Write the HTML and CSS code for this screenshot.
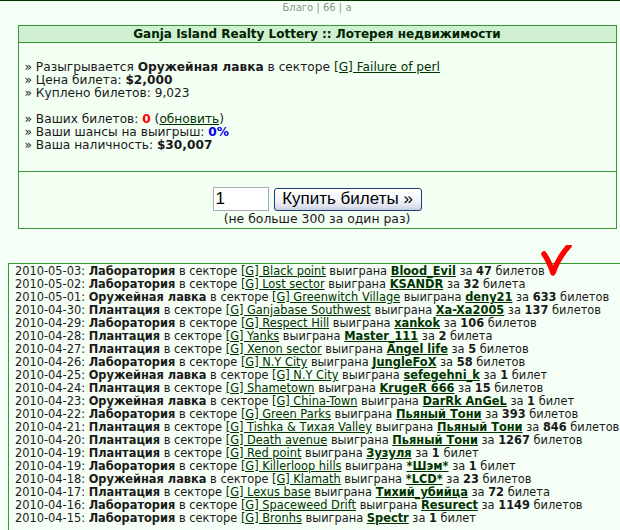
FILE: index.html
```html
<!DOCTYPE html>
<html>
<head>
<meta charset="utf-8">
<link rel="stylesheet" href="styles.css">
</head>
<body>
<div class="page">
<div class="topnav">Благо | <a href="#">66</a> | <a href="#">а</a></div>

<div class="lottery">
  <div class="lottery-head">Ganja Island Realty Lottery :: Лотерея недвижимости</div>
  <div class="lottery-info">
    <div>» Разыгрывается <b>Оружейная лавка</b> в секторе <a href="#">[G] Failure of perl</a></div>
    <div>» Цена билета: <b>$2,000</b></div>
    <div>» Куплено билетов: 9,023</div>
    <div class="gap">» Ваших билетов: <b class="red">0</b> (<a href="#">обновить</a>)</div>
    <div>» Ваши шансы на выигрыш: <b class="blue">0%</b></div>
    <div>» Ваша наличность: <b>$30,007</b></div>
  </div>
  <div class="lottery-buy">
    <div class="buy-row">
      <input class="qty" type="text" value="1">
      <button class="buy-btn">Купить билеты »</button>
    </div>
    <div class="note">(не больше 300 за один раз)</div>
  </div>
</div>

<div class="history-wrap">
  <svg class="tick" width="40" height="40" viewBox="0 0 40 40">
    <path d="M3 9 Q8 16 12 28 Q17 13 28 1" fill="none" stroke="#ff0000" stroke-width="5.5" stroke-linecap="round" stroke-linejoin="round"/>
  </svg>
  <div class="history">
    <div>2010-05-03: <b>Лаборатория</b> в секторе <a href="#">[G] Black point</a> выиграна <a class="w" href="#">Blood_Evil</a> за <b>47</b> билетов</div>
    <div>2010-05-02: <b>Лаборатория</b> в секторе <a href="#">[G] Lost sector</a> выиграна <a class="w" href="#">KSANDR</a> за <b>32</b> билета</div>
    <div>2010-05-01: <b>Оружейная лавка</b> в секторе <a href="#">[G] Greenwitch Village</a> выиграна <a class="w" href="#">deny21</a> за <b>633</b> билетов</div>
    <div>2010-04-30: <b>Плантация</b> в секторе <a href="#">[G] Ganjabase Southwest</a> выиграна <a class="w" href="#">Xa-Xa2005</a> за <b>137</b> билетов</div>
    <div>2010-04-29: <b>Лаборатория</b> в секторе <a href="#">[G] Respect Hill</a> выиграна <a class="w" href="#">xankok</a> за <b>106</b> билетов</div>
    <div>2010-04-28: <b>Плантация</b> в секторе <a href="#">[G] Yanks</a> выиграна <a class="w" href="#">Master_111</a> за <b>2</b> билета</div>
    <div>2010-04-27: <b>Плантация</b> в секторе <a href="#">[G] Xenon sector</a> выиграна <a class="w" href="#">Angel life</a> за <b>5</b> билетов</div>
    <div>2010-04-26: <b>Лаборатория</b> в секторе <a href="#">[G] N.Y City</a> выиграна <a class="w" href="#">JungleFoX</a> за <b>58</b> билетов</div>
    <div>2010-04-25: <b>Оружейная лавка</b> в секторе <a href="#">[G] N.Y City</a> выиграна <a class="w" href="#">sefegehni_k</a> за <b>1</b> билет</div>
    <div>2010-04-24: <b>Плантация</b> в секторе <a href="#">[G] Shametown</a> выиграна <a class="w" href="#">KrugeR 666</a> за <b>15</b> билетов</div>
    <div>2010-04-23: <b>Оружейная лавка</b> в секторе <a href="#">[G] China-Town</a> выиграна <a class="w" href="#">DarRk AnGeL</a> за <b>1</b> билет</div>
    <div>2010-04-22: <b>Лаборатория</b> в секторе <a href="#">[G] Green Parks</a> выиграна <a class="w" href="#">Пьяный Тони</a> за <b>393</b> билетов</div>
    <div>2010-04-21: <b>Плантация</b> в секторе <a href="#">[G] Tishka &amp; Тихая Valley</a> выиграна <a class="w" href="#">Пьяный Тони</a> за <b>846</b> билетов</div>
    <div>2010-04-20: <b>Плантация</b> в секторе <a href="#">[G] Death avenue</a> выиграна <a class="w" href="#">Пьяный Тони</a> за <b>1267</b> билетов</div>
    <div>2010-04-19: <b>Плантация</b> в секторе <a href="#">[G] Red point</a> выиграна <a class="w" href="#">Зузуля</a> за <b>1</b> билет</div>
    <div>2010-04-19: <b>Лаборатория</b> в секторе <a href="#">[G] Killerloop hills</a> выиграна <a class="w" href="#">*Шэм*</a> за <b>1</b> билет</div>
    <div>2010-04-18: <b>Оружейная лавка</b> в секторе <a href="#">[G] Klamath</a> выиграна <a class="w" href="#">*LCD*</a> за <b>23</b> билетов</div>
    <div>2010-04-17: <b>Плантация</b> в секторе <a href="#">[G] Lexus base</a> выиграна <a class="w" href="#">Тихий_убийца</a> за <b>72</b> билета</div>
    <div>2010-04-16: <b>Лаборатория</b> в секторе <a href="#">[G] Spaceweed Drift</a> выиграна <a class="w" href="#">Resurect</a> за <b>1149</b> билетов</div>
    <div>2010-04-15: <b>Лаборатория</b> в секторе <a href="#">[G] Bronhs</a> выиграна <a class="w" href="#">Spectr</a> за <b>1</b> билет</div>
  </div>
</div>
</div>
</body>
</html>
```

FILE: styles.css
```css
html {
  overflow: hidden;
}
body {
  margin: 0;
  background: #f5fff5;
  border-top: 1px solid #003300;
  font-family: "DejaVu Sans", Verdana, sans-serif;
  color: #1a1a1a;
}
.page {
  width: 634px;
}
a {
  color: #003300;
  text-decoration: underline;
}
.topnav {
  text-align: center;
  font-size: 10px;
  line-height: 12px;
  padding-top: 1px;
  color: #8a968a;
}
.topnav a {
  color: #8a968a;
  text-decoration: none;
}
.lottery {
  margin: 11px auto 0;
  width: 597px;
  border: 1px solid #339933;
  background: #f3fff3;
}
.lottery-head {
  background: #d0eed0;
  border-bottom: 1px solid #339933;
  text-align: center;
  font-weight: bold;
  font-size: 12px;
  line-height: 16px;
  color: #002200;
}
.lottery-info {
  padding: 18px 0 19px 6px;
  font-size: 12.2px;
  line-height: 13px;
}
.lottery-info .gap {
  margin-top: 13px;
}
.red {
  color: #ff0000;
}
.blue {
  color: #0000ee;
}
.lottery-buy {
  border-top: 1px solid #339933;
  padding: 15px 0 2px;
  display: flex;
  flex-direction: column;
  align-items: center;
}
.buy-row {
  display: flex;
  align-items: center;
  gap: 5px;
}
.qty {
  width: 50px;
  height: 22px;
  padding: 0 2px;
  border: 1px solid #a5acb5;
  font-family: "Liberation Sans", Arial, sans-serif;
  font-size: 17px;
  background: #fff;
  color: #000;
}
.buy-btn {
  height: 23px;
  width: 148px;
  padding: 0;
  border: 1px solid #1c3c78;
  border-radius: 3px;
  background: linear-gradient(#ffffff, #f6f7fb 45%, #e2e5ef 80%, #c9cede);
  font-family: "Liberation Sans", Arial, sans-serif;
  font-size: 17px;
  color: #000;
}
.note {
  font-size: 12.4px;
  line-height: 14px;
  margin-top: 1px;
  color: #1a1a1a;
}
.history-wrap {
  position: relative;
  margin: 34px 0 0 8px;
}
.history {
  width: 611px;
  border: 1px solid #339933;
  padding: 1px 0 6px 6px;
  font-size: 11.4px;
  line-height: 13px;
  white-space: nowrap;
}
.history .w {
  font-weight: bold;
}
.tick {
  position: absolute;
  left: 533px;
  top: -18px;
}
```
